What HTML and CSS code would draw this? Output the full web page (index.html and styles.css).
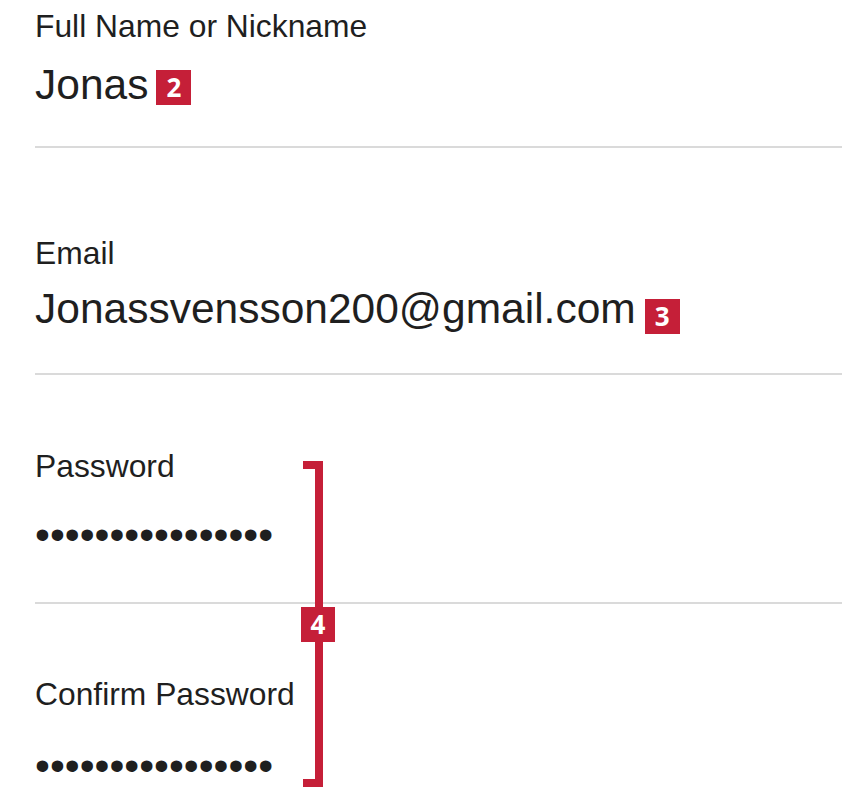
FILE: index.html
```html
<!DOCTYPE html>
<html lang="en">
<head>
<meta charset="utf-8">
<title>Sign up form</title>
<link rel="stylesheet" href="styles.css">
</head>
<body>
<form class="form">
  <div class="field field--name">
    <div class="label">Full Name or Nickname</div>
    <div class="value">Jonas<span class="badge badge--2">2</span></div>
  </div>
  <div class="field field--email">
    <div class="label">Email</div>
    <div class="value">Jonassvensson200@gmail.com<span class="badge badge--3">3</span></div>
  </div>
  <div class="passwords">
    <div class="field field--pass">
      <div class="label">Password</div>
      <div class="value value--dots">••••••••••••••••</div>
    </div>
    <div class="field field--confirm">
      <div class="label">Confirm Password</div>
      <div class="value value--dots">••••••••••••••••</div>
    </div>
    <div class="bracket" aria-hidden="true"></div>
    <span class="badge badge--4">4</span>
  </div>
</form>
</body>
</html>
```

FILE: styles.css
```css
html, body {
  margin: 0;
  padding: 0;
  background: #ffffff;
}

body {
  font-family: "Liberation Sans", Arial, sans-serif;
  color: #1f1f1f;
  width: 842px;
  height: 798px;
  overflow: hidden;
}

.form {
  margin: 0 0 0 35px;
}

.field {
  border-bottom: 2px solid #dadada;
}

.label {
  font-size: 31.8px;
  line-height: 36px;
}

.value {
  font-size: 42.5px;
  line-height: 50px;
  white-space: nowrap;
}

.field--name {
  padding-top: 8px;
  padding-bottom: 36px;
}
.field--name .value {
  margin-top: 16px;
}

.field--email {
  padding-top: 87px;
  padding-bottom: 39px;
}
.field--email .value {
  margin-top: 13px;
}

.passwords {
  position: relative;
}

.field--pass {
  padding-top: 73px;
  padding-bottom: 42px;
}
.field--pass .value {
  margin-top: 26px;
}

.field--confirm {
  border-bottom: none;
  padding-top: 72px;
}
.field--confirm .value {
  margin-top: 29px;
}

.badge {
  display: inline-block;
  width: 35px;
  height: 35px;
  background: #c51f38;
  color: #ffffff;
  font-family: "Open Sans", "Liberation Sans", sans-serif;
  font-weight: 700;
  font-size: 26px;
  line-height: 35px;
  text-align: center;
}

.badge--2 {
  margin-left: 8px;
  vertical-align: 2px;
}

.badge--3 {
  margin-left: 9px;
  vertical-align: -3px;
}

.bracket {
  position: absolute;
  left: 268px;
  top: 86px;
  width: 20px;
  height: 326px;
  box-sizing: border-box;
  border-top: 8px solid #c51f38;
  border-right: 8px solid #c51f38;
  border-bottom: 8px solid #c51f38;
}

.badge--4 {
  position: absolute;
  left: 266px;
  top: 232px;
  width: 34px;
}
```
